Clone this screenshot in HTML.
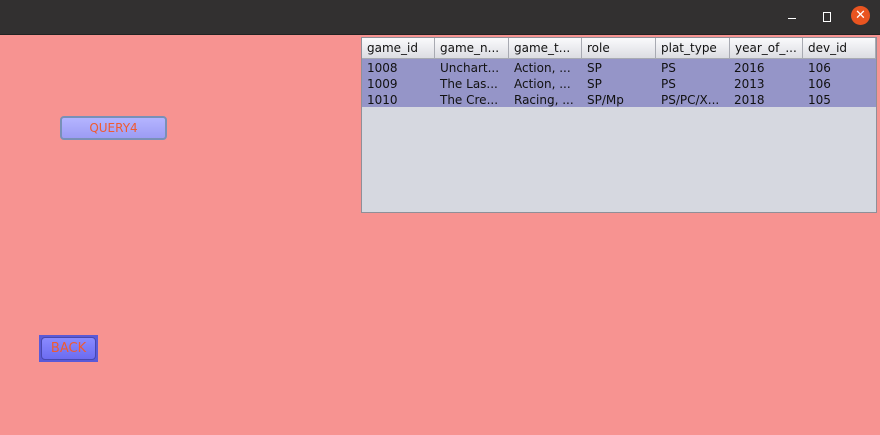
<!DOCTYPE html>
<html><head><style>
body{margin:0;width:880px;height:435px;background:#f79391;font-family:"DejaVu Sans","Liberation Sans",sans-serif;position:relative;overflow:hidden}
.tb{position:absolute;left:0;top:0;width:880px;height:34px;background:#323030;border-bottom:1px solid #222}
.tbl{position:absolute;left:361px;top:37px;width:514px;height:174px;background:#d6d8e0;border:1px solid #8f8f98}
.hd{position:absolute;top:0;height:21px;background:linear-gradient(#fafafc,#dcdde2);border-right:1px solid #a8aab2;border-bottom:1px solid #a8aab2;font-size:12px;line-height:20px;color:#111;padding-left:5px;box-sizing:border-box}
.rows{position:absolute;left:0;top:21px;width:514px;height:48px;background:#9595c8}
.c{position:absolute;font-size:12px;color:#111;line-height:16px}
</style></head><body>
<div class="tb">
<div style="position:absolute;left:788px;top:18px;width:8px;height:1px;background:#fff"></div>
<div style="position:absolute;left:823px;top:12px;width:6px;height:8px;border:1px solid #fff"></div>
<div style="position:absolute;left:851px;top:6px;width:19px;height:19px;border-radius:50%;background:#e95420;color:#fff;font-size:13px;line-height:19px;text-align:center">✕</div>
</div>
<div class="tbl">
<div class="hd" style="left:0;width:73px">game_id</div>
<div class="hd" style="left:73px;width:74px">game_n...</div>
<div class="hd" style="left:147px;width:73px">game_t...</div>
<div class="hd" style="left:220px;width:74px">role</div>
<div class="hd" style="left:294px;width:74px">plat_type</div>
<div class="hd" style="left:368px;width:73px">year_of_...</div>
<div class="hd" style="left:441px;width:73px">dev_id</div>
<div class="rows">
<div class="c" style="left:5px;top:1px">1008<br>1009<br>1010</div>
<div class="c" style="left:78px;top:1px">Unchart...<br>The Las...<br>The Cre...</div>
<div class="c" style="left:152px;top:1px">Action, ...<br>Action, ...<br>Racing, ...</div>
<div class="c" style="left:225px;top:1px">SP<br>SP<br>SP/Mp</div>
<div class="c" style="left:299px;top:1px">PS<br>PS<br>PS/PC/X...</div>
<div class="c" style="left:372px;top:1px">2016<br>2013<br>2018</div>
<div class="c" style="left:446px;top:1px">106<br>106<br>105</div>
</div>
</div>
<div style="position:absolute;left:60px;top:116px;width:103px;height:20px;border:2px solid #7890b8;border-radius:4px;background:linear-gradient(#b4b4ff,#9c9cf4);color:#f05a30;font-size:12px;line-height:20px;text-align:center">QUERY4</div>
<div style="position:absolute;left:39px;top:335px;width:59px;height:27px;background:#5a5ad8"></div>
<div style="position:absolute;left:41px;top:337px;width:53px;height:21px;border:1px solid #4848b0;border-radius:4px;background:linear-gradient(#8a8aff,#6c6cf0);color:#f05a30;font-size:13px;line-height:22px;text-align:center">BACK</div>
</body></html>
